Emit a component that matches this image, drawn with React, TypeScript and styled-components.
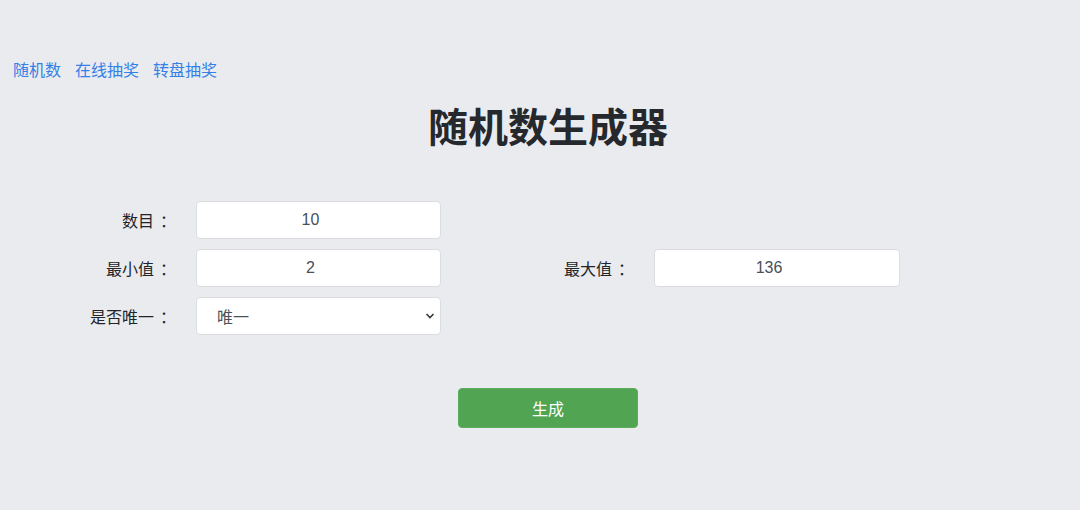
import React from "react";
import styled, { createGlobalStyle } from "styled-components";

const GlobalStyle = createGlobalStyle`
  html, body {
    margin: 0;
    padding: 0;
    background: #e9ebef;
  }
  body {
    font-family: "Liberation Sans", "Noto Sans CJK SC", sans-serif;
    color: #212529;
  }
  * { box-sizing: border-box; }
`;

const Page = styled.div`
  width: 1080px;
  height: 510px;
  background: #e9ebef;
  overflow: hidden;
`;

const Nav = styled.nav`
  display: flex;
  gap: 14px;
  padding: 59px 0 0 13px;
  height: 79px;
`;

const NavLink = styled.a`
  font-family: "Noto Sans CJK SC", sans-serif;
  font-size: 16px;
  line-height: 20px;
  color: #3580e6;
  text-decoration: none;
`;

const Main = styled.main`
  padding-left: 16px;
  display: flex;
  flex-direction: column;
`;

const Title = styled.h1`
  margin: 22px 0 0;
  text-align: center;
  font-family: "Noto Sans CJK SC", sans-serif;
  font-size: 40px;
  line-height: 48px;
  font-weight: 700;
  color: #25282c;
`;

const Form = styled.form`
  margin-top: 52px;
  display: grid;
  grid-template-columns: 154px 245px 161px 246px;
  grid-auto-rows: 38px;
  column-gap: 26px;
  row-gap: 10px;
`;

const Label = styled.label<{ $col: number; $row: number }>`
  grid-column: ${(p) => p.$col};
  grid-row: ${(p) => p.$row};
  display: flex;
  align-items: center;
  justify-content: flex-end;
  padding-bottom: 1px;
  font-family: "Noto Sans CJK SC", sans-serif;
  font-size: 16px;
  color: #212529;
  white-space: nowrap;
`;

const Colon = styled.span`
  display: inline-block;
  width: 16px;
  padding-left: 6px;
`;

const Field = styled.div<{ $col: number; $row: number }>`
  grid-column: ${(p) => p.$col};
  grid-row: ${(p) => p.$row};
  position: relative;
`;

const Input = styled.input`
  width: 100%;
  height: 38px;
  border: 1px solid #dadde1;
  border-radius: 4px;
  background: #fff;
  padding: 0 28px 0 12px;
  text-align: center;
  font-family: "Liberation Sans", "Noto Sans CJK SC", sans-serif;
  font-size: 16px;
  color: #495057;
  outline: none;
`;

const Select = styled.select`
  width: 100%;
  height: 38px;
  border: 1px solid #dadde1;
  border-radius: 4px;
  background: #fff;
  padding: 0 28px 0 20px;
  font-family: "Noto Sans CJK SC", sans-serif;
  font-size: 16px;
  color: #495057;
  appearance: none;
  -webkit-appearance: none;
  outline: none;
`;

const Chevron = styled.svg`
  position: absolute;
  right: 6px;
  top: 15px;
  width: 10px;
  height: 8px;
  pointer-events: none;
`;

const ButtonRow = styled.div`
  margin-top: 53px;
  display: flex;
  justify-content: center;
`;

const Button = styled.button`
  width: 180px;
  height: 40px;
  border: 1px solid #5cae5c;
  border-radius: 4px;
  background: #51a451;
  color: #fff;
  font-family: "Noto Sans CJK SC", sans-serif;
  font-size: 16px;
  cursor: pointer;
`;

export default function App() {
  return (
    <Page>
      <GlobalStyle />
      <Nav>
        <NavLink href="#">随机数</NavLink>
        <NavLink href="#">在线抽奖</NavLink>
        <NavLink href="#">转盘抽奖</NavLink>
      </Nav>
      <Main>
        <Title>随机数生成器</Title>
        <Form onSubmit={(e) => e.preventDefault()}>
          <Label $col={1} $row={1}>数目<Colon>：</Colon></Label>
          <Field $col={2} $row={1}>
            <Input defaultValue="10" />
          </Field>
          <Label $col={1} $row={2}>最小值<Colon>：</Colon></Label>
          <Field $col={2} $row={2}>
            <Input defaultValue="2" />
          </Field>
          <Label $col={3} $row={2}>最大值<Colon>：</Colon></Label>
          <Field $col={4} $row={2}>
            <Input defaultValue="136" />
          </Field>
          <Label $col={1} $row={3}>是否唯一<Colon>：</Colon></Label>
          <Field $col={2} $row={3}>
            <Select defaultValue="1">
              <option value="1">唯一</option>
              <option value="0">不唯一</option>
            </Select>
            <Chevron viewBox="0 0 10 8">
              <path d="M1.5 2 L5 5.5 L8.5 2" fill="none" stroke="#343a40" strokeWidth="1.6" />
            </Chevron>
          </Field>
        </Form>
        <ButtonRow>
          <Button type="button">生成</Button>
        </ButtonRow>
      </Main>
    </Page>
  );
}
